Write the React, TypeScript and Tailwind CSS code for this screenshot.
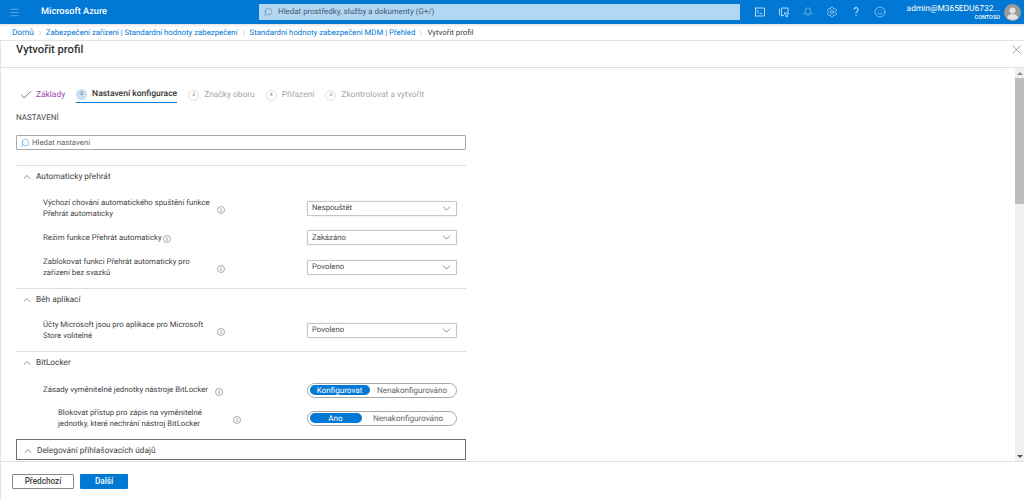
import React from 'react';
import { Bell, ChevronDown, ChevronRight, ChevronUp, Check, Menu, Search, Settings, Smile, X } from 'lucide-react';

const font = "font-['Roboto','Noto_Sans',sans-serif]";

const InfoIcon = () => (
  <svg width="8" height="8" viewBox="0 0 8 8" fill="none" className="mt-[3px] shrink-0">
    <circle cx="4" cy="4" r="3.5" stroke="#8a8886" strokeWidth="0.7" />
    <path d="M4 3.4V6M4 2v.7" stroke="#605e5c" strokeWidth="0.7" />
  </svg>
);

const Dropdown = ({ value }: { value: string }) => (
  <div className="flex h-[15px] w-[150px] shrink-0 items-center justify-between rounded-[1px] border border-[#c8c6c4] pl-[4px] pr-[3px] text-[#4a4a4a] shadow-[0_0_1px_#aaa]">
    <span>{value}</span>
    <ChevronDown size={13} strokeWidth={1} className="text-[#333]" />
  </div>
);

const Toggle = ({ on, off, onWidth }: { on: string; off: string; onWidth: string }) => (
  <div className="flex h-[15px] w-[150px] shrink-0 items-center rounded-full border border-[#a6a6a6] p-[1.5px] text-[8.1px]">
    <div className={`flex h-full items-center justify-center rounded-full bg-[#0078d4] text-white ${onWidth}`}>{on}</div>
    <div className="flex flex-1 items-center justify-center text-[#666]">{off}</div>
  </div>
);

const SectionHead = ({ title }: { title: string }) => (
  <div className="flex h-[22px] items-center gap-[3px] pl-[5px] text-[8.3px] text-[#444]">
    <ChevronUp size={12} strokeWidth={1.2} className="text-[#444]" />
    <span>{title}</span>
  </div>
);

const Row = ({ lines, h, children, infoGap = 'w-[174px]' }: { lines: string[]; h: string; children: React.ReactNode; infoGap?: string }) => (
  <div className={`flex items-center pl-[27px] pr-[9px] ${h}`}>
    <div className={`shrink-0 whitespace-nowrap pt-[1px] leading-[10.5px] text-[#444] ${infoGap}`}>
      {lines.map((l) => (
        <div key={l}>{l}</div>
      ))}
    </div>
    <div className="flex flex-1 items-center justify-between">
      <InfoIcon />
      {children}
    </div>
  </div>
);

const Step = ({ n, label, active }: { n: string; label: string; active?: boolean }) => (
  <div className={`flex h-[17px] items-center gap-[5px] pt-[1px] ${active ? 'border-b-[1px] border-[#0078d4]' : ''}`}>
    <div
      className={`flex h-[11px] w-[11px] items-center justify-center rounded-full text-[5px] leading-none ${
        active ? 'bg-[#c7e0f4] text-[#333]' : 'border border-[#e1dfdd] text-[#777]'
      }`}
    >
      {n}
    </div>
    <span className={active ? 'text-[8.5px] font-medium text-[#333]' : 'text-[#a6a6a6]'}>{label}</span>
  </div>
);

const Sep = () => <ChevronRight size={8} strokeWidth={1} className="text-[#777]" />;

export default function App() {
  return (
    <div className={`flex h-[500px] w-[1024px] flex-col overflow-hidden bg-white text-[7.8px] [text-rendering:geometricPrecision] ${font}`}>
      {/* Top bar */}
      <header className="flex h-[24px] shrink-0 items-center bg-[#0078d4] text-white">
        <Menu size={11} strokeWidth={1} className="ml-[9px] shrink-0 text-[#cfe5f7]" />
        <span className="ml-[21px] w-[218px] shrink-0 text-[9.2px] font-medium">Microsoft Azure</span>
        <div className="flex h-[16px] w-[481px] shrink-0 items-center gap-[5px] rounded-[1px] bg-[#b3d6f2] pl-[4px] text-[7.95px] text-[#3b5c78]">
          <Search size={10} strokeWidth={1} className="-scale-x-100" />
          <span>Hledat prostředky, služby a dokumenty (G+/)</span>
        </div>
        <div className="ml-[8px] flex h-full shrink-0 items-center">
          <div className="flex w-[24px] justify-center">
            <svg width="10" height="10" viewBox="0 0 10 10" fill="none" stroke="currentColor" strokeWidth="0.7">
              <rect x="0.5" y="1" width="9" height="8" />
              <path d="M2 3l1.500 1.500L2 6M4.500 6.500H7" />
            </svg>
          </div>
          <div className="flex w-[24px] justify-center">
            <svg width="11" height="11" viewBox="0 0 11 11" fill="none" stroke="currentColor" strokeWidth="0.7">
              <path d="M0.500 1.500v7M2.500 1v8.500M2.500 1H9v4M2.500 8.500H5" />
              <path d="M5 6h5L8.200 8v2l-1.400-.6V8z" />
            </svg>
          </div>
          <div className="flex w-[24px] justify-center">
            <Bell size={10} strokeWidth={1} />
          </div>
          <div className="flex w-[24px] justify-center">
            <Settings size={12} strokeWidth={1} />
          </div>
          <div className="flex w-[24px] justify-center text-[12px] font-light leading-none">?</div>
          <div className="flex w-[24px] justify-center">
            <Smile size={12} strokeWidth={1} />
          </div>
        </div>
        <div className="mr-[4px] flex flex-1 flex-col items-end pt-[3px] leading-[9px]">
          <span className="text-[8.4px]">admin@M365EDU6732...</span>
          <span className="text-[5.5px] font-medium">CONTOSO</span>
        </div>
        <svg width="17" height="17" viewBox="0 0 17 17" className="mr-[3px] shrink-0">
          <circle cx="8.500" cy="8.500" r="8.500" fill="#9a9a9a" />
          <circle cx="8.500" cy="6.500" r="3" fill="#e3e3e3" />
          <path d="M3 14c.7-3 3-4 5.500-4s4.800 1 5.500 4a8.500 8.500 0 0 1-11 0z" fill="#e3e3e3" />
        </svg>
      </header>

      {/* Breadcrumb */}
      <nav className="flex h-[16px] shrink-0 items-center gap-[2px] pl-[12px] pt-[2px] text-[#0078d4] shadow-[inset_0_3px_3px_-2px_rgba(0,0,0,0.15)]">
        <span className="text-[8.2px]">Domů</span>
        <Sep />
        <span>Zabezpečení zařízení | Standardní hodnoty zabezpečení</span>
        <Sep />
        <span>Standardní hodnoty zabezpečení MDM | Přehled</span>
        <Sep />
        <span className="text-[#444]">Vytvořit profil</span>
      </nav>

      {/* Blade */}
      <div className="flex min-h-0 flex-1 flex-col border-l border-t border-[#e4e4e4]">
        <div className="flex h-[27px] shrink-0 items-start justify-between border-b border-[#e1dfdd] pl-[15px] pr-[0px]">
          <h1 className="text-[11.2px] font-medium leading-[18px] text-[#333]">Vytvořit profil</h1>
          <X size={15} strokeWidth={0.8} className="mt-[1px] text-[#444]" />
        </div>

        <div className="flex min-h-0 flex-1">
          <main className="min-w-0 flex-1 pl-[15px]">
            {/* Stepper */}
            <div className="flex h-[35px] items-end gap-[11px] pl-[3px] text-[8.4px]">
              <div className="flex h-[17px] items-center gap-[3px] pt-[1px]">
                <Check size={14} strokeWidth={1.1} className="text-[#333]" />
                <span className="text-[#a33fb5]">Základy</span>
              </div>
              <Step n="2" label="Nastavení konfigurace" active />
              <Step n="3" label="Značky oboru" />
              <Step n="4" label="Přiřazení" />
              <Step n="5" label="Zkontrolovat a vytvořit" />
            </div>

            <div className="mt-[9px] h-[12px] text-[8px] leading-[12px] text-[#444]">NASTAVENÍ</div>

            <div className="mt-[11px] flex h-[15px] w-[450px] items-center gap-[2px] rounded-[1px] border border-[#a8a8a8] pl-[3px] text-[#666]">
              <Search size={10} strokeWidth={1} className="-scale-x-100 text-[#0078d4]" />
              <span>Hledat nastavení</span>
            </div>

            <div className="mt-[15px] w-[450px]">
              <section className="h-[124px] border-t border-b border-[#e1dfdd]">
                <SectionHead title="Automaticky přehrát" />
                <div className="mt-[5px]">
                  <Row h="h-[30px]" lines={['Výchozí chování automatického spuštění funkce', 'Přehrát automaticky']}>
                    <Dropdown value="Nespouštět" />
                  </Row>
                  <Row h="h-[29px]" infoGap="w-[120px]" lines={['Režim funkce Přehrát automaticky']}>
                    <Dropdown value="Zakázáno" />
                  </Row>
                  <Row h="h-[30px]" lines={['Zablokovat funkci Přehrát automaticky pro', 'zařízení bez svazků']}>
                    <Dropdown value="Povoleno" />
                  </Row>
                </div>
              </section>

              <section className="h-[63px] border-b border-[#e1dfdd]">
                <SectionHead title="Běh aplikací" />
                <div className="mt-[4px]">
                  <Row h="h-[30px]" lines={['Účty Microsoft jsou pro aplikace pro Microsoft', 'Store volitelné']}>
                    <Dropdown value="Povoleno" />
                  </Row>
                </div>
              </section>

              <section className="h-[88px]">
                <SectionHead title="BitLocker" />
                <div className="mt-[2px]">
                  <Row h="h-[28px]" infoGap="w-[172px]" lines={['Zásady vyměnitelné jednotky nástroje BitLocker']}>
                    <Toggle on="Konfigurovat" off="Nenakonfigurováno" onWidth="w-[60px]" />
                  </Row>
                  <div className="pl-[15px]">
                    <Row h="h-[28px]" infoGap="w-[175px]" lines={['Blokovat přístup pro zápis na vyměnitelné', 'jednotky, které nechrání nástroj BitLocker']}>
                      <Toggle on="Ano" off="Nenakonfigurováno" onWidth="w-[52px]" />
                    </Row>
                  </div>
                </div>
              </section>

              <section className="-mt-[1px] h-[21px] border border-[#6e6e6e]">
                <SectionHead title="Delegování přihlašovacích údajů" />
              </section>
            </div>
          </main>

          {/* Scrollbar */}
          <div className="flex w-[9px] shrink-0 flex-col bg-[#f0f0f0]">
            <div className="flex h-[10px] items-center justify-center">
              <div className="h-0 w-0 border-x-[3px] border-b-[3px] border-x-transparent border-b-[#8a8a8a]" />
            </div>
            <div className="h-[126px] bg-[#bdbdbd]" />
            <div className="flex-1" />
            <div className="flex h-[10px] items-center justify-center">
              <div className="h-0 w-0 border-x-[3px] border-t-[3px] border-x-transparent border-t-[#555]" />
            </div>
          </div>
        </div>

        {/* Footer */}
        <footer className="flex h-[39px] shrink-0 items-center gap-[6px] border-t border-[#e1dfdd] pl-[11px] text-[8.2px]">
          <button className="h-[15px] w-[62px] rounded-[1px] border border-[#8a8886] font-medium text-[#444]">Předchozí</button>
          <button className="h-[15px] w-[48px] rounded-[1px] bg-[#0078d4] font-medium text-white">Další</button>
        </footer>
      </div>
    </div>
  );
}
